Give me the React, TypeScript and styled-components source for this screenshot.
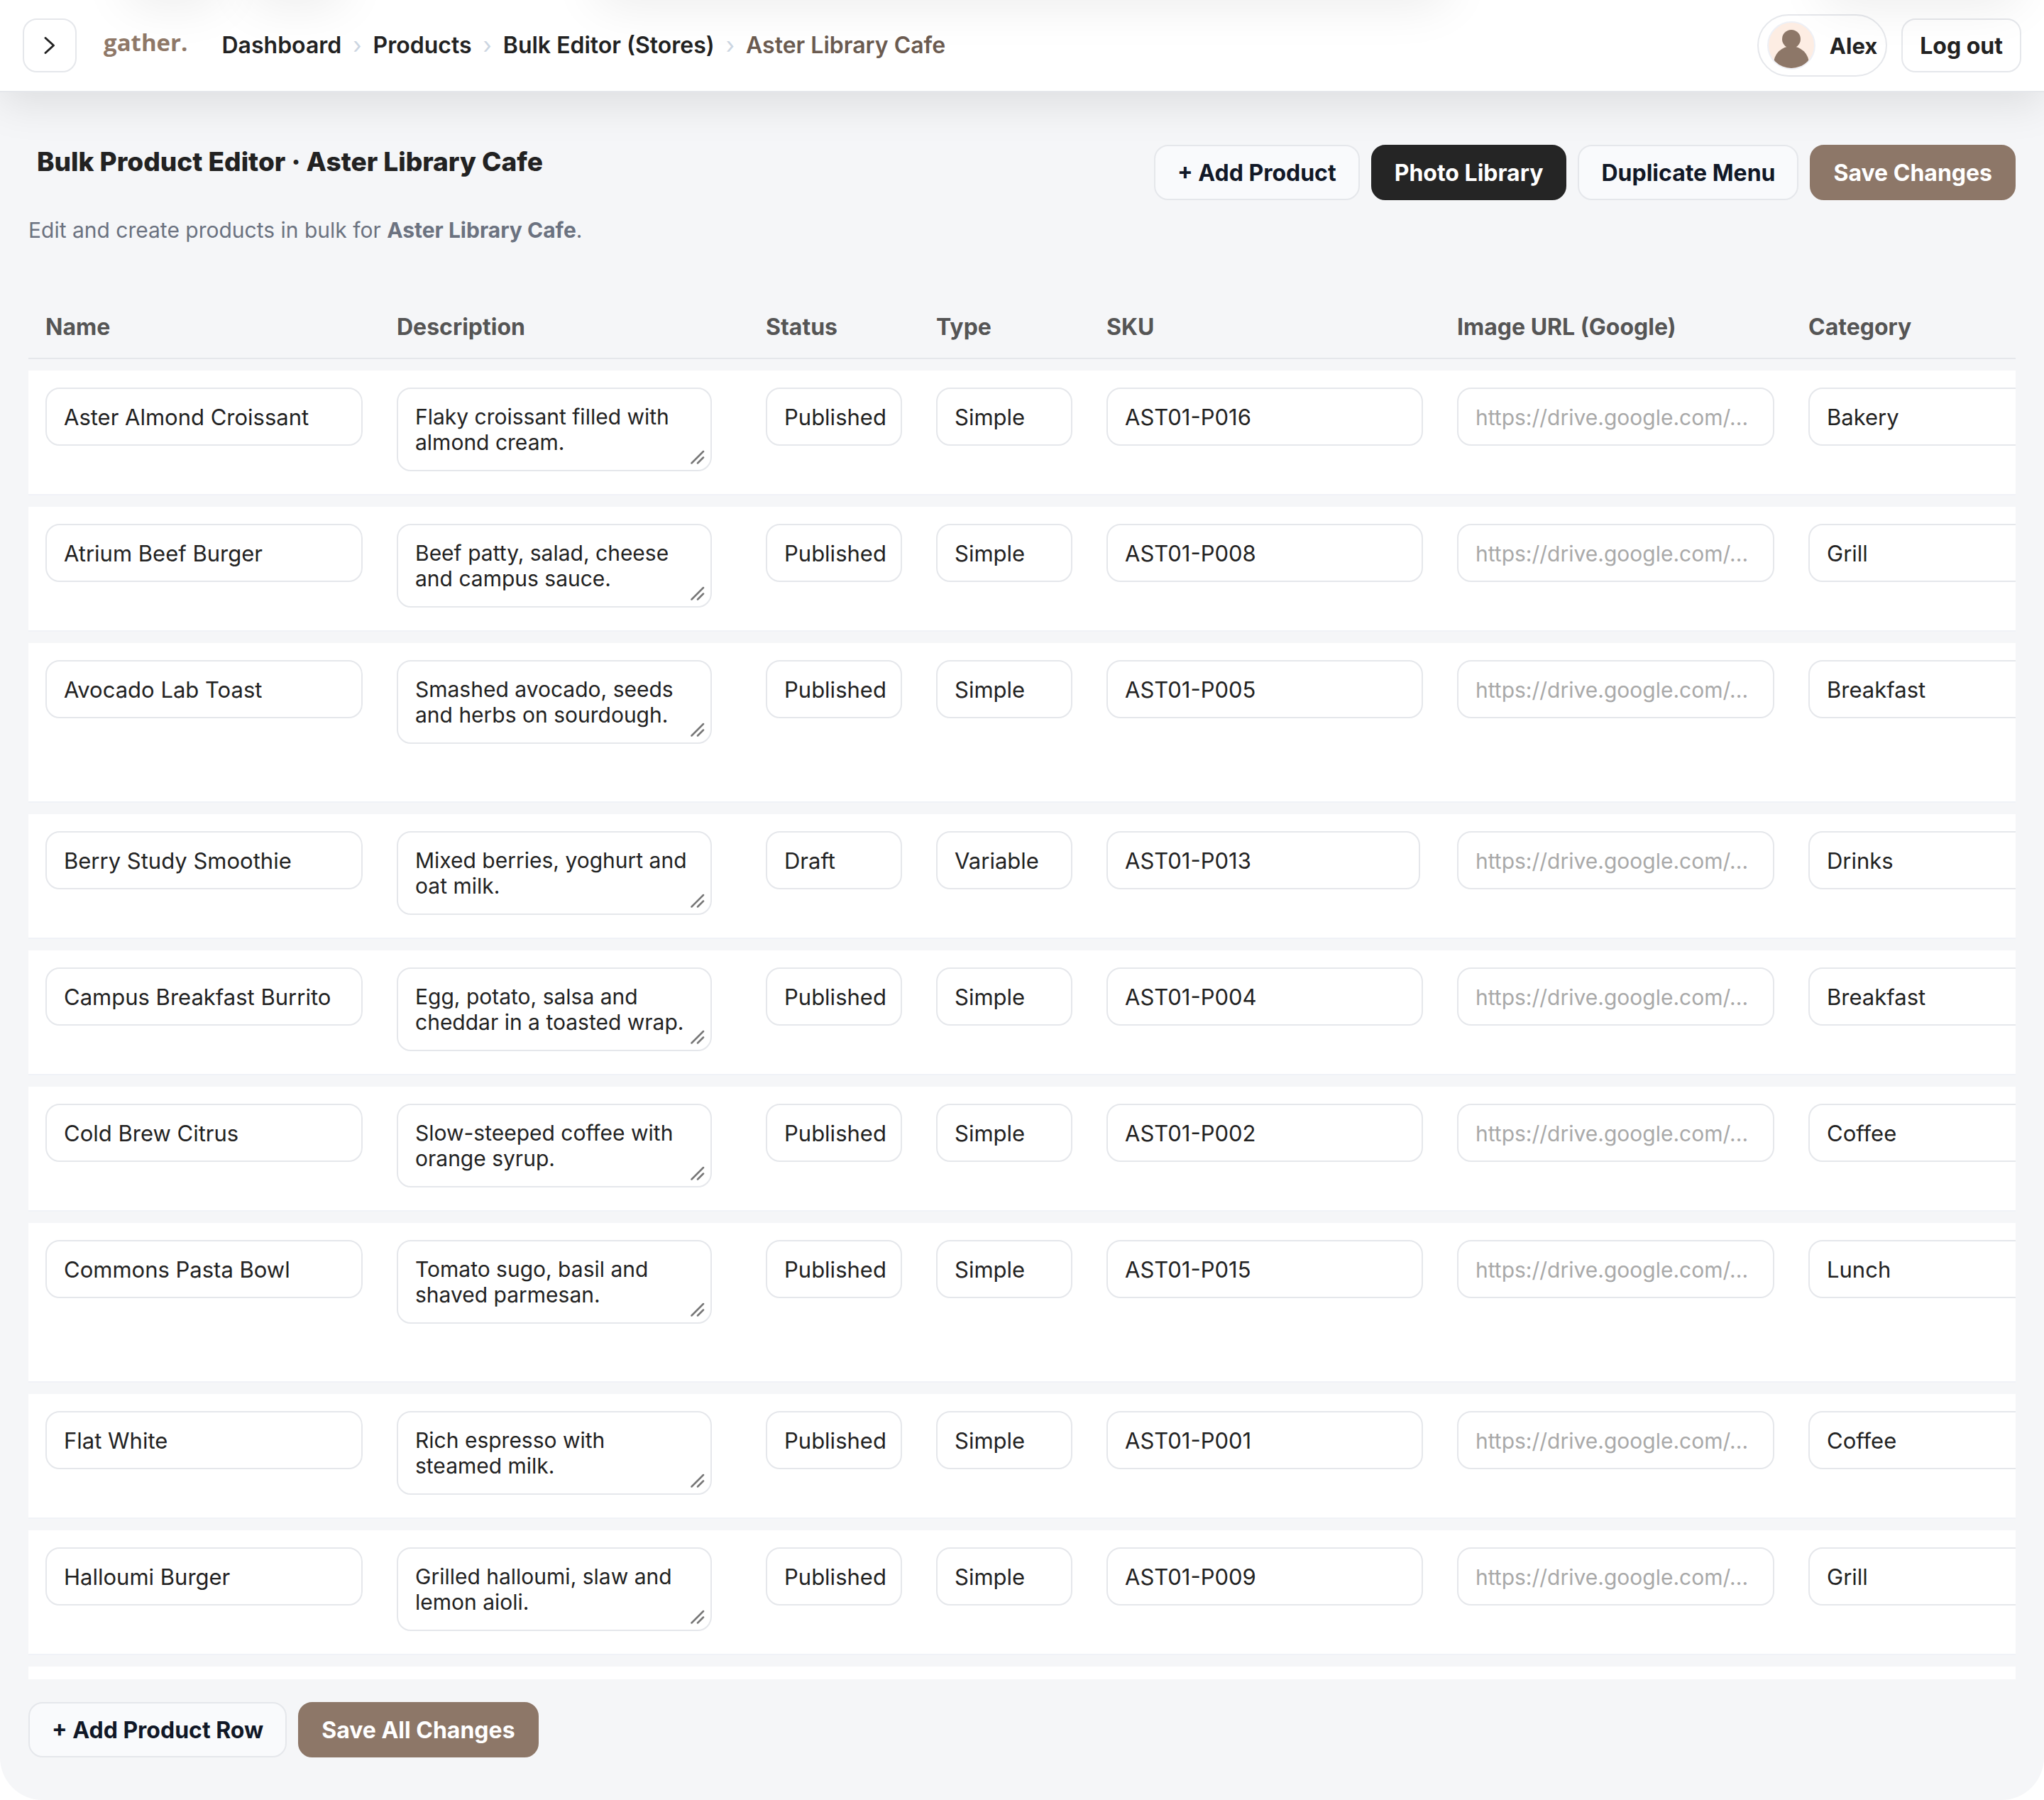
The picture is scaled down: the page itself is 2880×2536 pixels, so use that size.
import React, { useId } from "react";
import styled, { createGlobalStyle, css } from "styled-components";

const GlobalStyle = createGlobalStyle`
  *, *::before, *::after { box-sizing: border-box; }
  body {
    margin: 0;
    background: #ffffff;
    color: #222222;
    font-family: Inter, "Liberation Sans", sans-serif;
    font-size: 31px;
  }
  button, input, select, textarea { font: inherit; color: inherit; }
`;

const Shell = styled.div`
  display: flex;
  flex-direction: column;
  height: 100vh;
  overflow: hidden;
  background: #f5f6f8;
  border-radius: 0 0 60px 60px;
`;

/* ---------- top bar ---------- */

const TopBar = styled.header`
  position: relative;
  flex: none;
  display: flex;
  align-items: center;
  padding: 20px 32px;
  background: #ffffff;
  border-bottom: 2px solid #e5e7eb;
  box-shadow: 0 16px 60px rgba(0, 0, 0, 0.1);
`;

const ShadeLayer = styled.div`
  position: absolute;
  inset: 0;
  overflow: hidden;
  pointer-events: none;
`;

const Shade = styled.i<{ $left: string; $width: string }>`
  position: absolute;
  bottom: 100%;
  left: ${(p) => p.$left};
  width: ${(p) => p.$width};
  height: 72px;
  border-radius: 36px;
  box-shadow: 0 8px 68px rgba(0, 0, 0, 0.08);
`;

const MenuToggle = styled.button`
  display: grid;
  place-items: center;
  width: 76px;
  height: 76px;
  padding: 0;
  background: #ffffff;
  border: 2px solid #e5e7eb;
  border-radius: 20px;
`;

const Logo = styled.a`
  margin-left: 38px;
  padding-bottom: 8px;
  color: #8f7868;
  font-family: "Open Sans", sans-serif;
  font-size: 33px;
  line-height: 40px;
  font-weight: 700;
  text-decoration: none;
`;

const Crumbs = styled.nav`
  margin-left: 48px;

  ol {
    display: flex;
    gap: 16px;
    margin: 0;
    padding: 0;
    list-style: none;
    font-size: 32px;
    line-height: 40px;
    font-weight: 600;
  }
  li {
    display: flex;
    gap: 16px;
  }
  li + li::before {
    content: "›";
    color: #cbd5e1;
    font-weight: 400;
  }
`;

const CrumbLink = styled.a`
  color: #222222;
  text-decoration: none;
`;

const CrumbCurrent = styled.span`
  color: #6b5b50;
`;

const Account = styled.div`
  display: flex;
  align-items: center;
  gap: 20px;
  margin-left: auto;
`;

const UserPill = styled.button`
  display: flex;
  align-items: center;
  gap: 20px;
  height: 88px;
  padding: 0 12px;
  background: transparent;
  border: 2px solid #e5e7eb;
  border-radius: 44px;
  font-size: 31px;
  font-weight: 700;
`;

const LogoutButton = styled.button`
  height: 76px;
  padding: 0 24px;
  background: transparent;
  border: 2px solid #e5e7eb;
  border-radius: 20px;
  font-size: 32px;
  font-weight: 700;
`;

/* ---------- page ---------- */

const Page = styled.main`
  flex: 1;
  min-height: 0;
  display: flex;
  flex-direction: column;
  padding: 74px 40px 60px;
`;

const PageHead = styled.div`
  display: flex;
  justify-content: space-between;
  align-items: flex-start;
`;

const Title = styled.h1`
  margin: 0;
  padding-left: 12px;
  font-size: 37px;
  line-height: 48px;
  font-weight: 800;
`;

const Intro = styled.p`
  margin: 48px 0 0;
  color: #6b7280;
  font-size: 30px;
  line-height: 48px;
`;

const Actions = styled.div`
  display: flex;
  gap: 16px;
`;

type Tone = "light" | "dark" | "brand";

const tones = {
  light: css`
    background: #f9fafc;
    border-color: #e5e7eb;
    color: #111827;
  `,
  dark: css`
    background: #252525;
    border-color: #252525;
    color: #ffffff;
  `,
  brand: css`
    background: #8d7768;
    border-color: #8d7768;
    color: #ffffff;
  `,
};

const Button = styled.button<{ $tone: Tone }>`
  height: 78px;
  padding: 0 31px;
  border: 2px solid;
  border-radius: 20px;
  font-size: 32px;
  font-weight: 700;
  white-space: nowrap;
  ${(p) => tones[p.$tone]}
`;

/* ---------- table ---------- */

const TableScroll = styled.div`
  flex: 1;
  min-height: 0;
  margin: 52px 0 32px;
  overflow: auto;
  scrollbar-width: none;
`;

const Table = styled.table`
  width: 2978px;
  table-layout: fixed;
  border-collapse: separate;
  border-spacing: 0 16px;
`;

const HeadCell = styled.th`
  height: 90px;
  padding: 0 24px;
  border-bottom: 2px solid #e5e7eb;
  color: #555555;
  font-size: 32px;
  font-weight: 700;
  text-align: left;
`;

const Cell = styled.td<{ $tall?: boolean }>`
  height: ${(p) => (p.$tall ? 225 : 176)}px;
  padding: 24px;
  background: #ffffff;
  border-bottom: 2px solid #f0f2f7;
  vertical-align: top;
`;

const field = css`
  display: block;
  width: 100%;
  background: #ffffff;
  border: 2px solid #e5e7eb;
  border-radius: 20px;
  outline: none;
  color: #222222;
`;

const TextField = styled.input<{ $narrow?: boolean }>`
  ${field}
  width: ${(p) => (p.$narrow ? "99%" : "100%")};
  height: 82px;
  padding: 0 24px;
  font-size: 31px;

  &::placeholder {
    color: #a9a9a9;
    font-size: 30px;
    opacity: 1;
  }
`;

const SelectField = styled.select`
  ${field}
  height: 82px;
  padding: 0 0 0 24px;
  font-size: 31px;
  appearance: none;
`;

const AreaWrap = styled.div`
  position: relative;
  width: 444px;
`;

const AreaField = styled.textarea`
  ${field}
  height: 118px;
  padding: 21px 24px;
  font-size: 30px;
  line-height: 36px;
  resize: none;
  overflow: hidden;
`;

const Grip = styled.svg`
  position: absolute;
  right: 10px;
  bottom: 10px;
  pointer-events: none;
`;

/* ---------- data ---------- */

type Product = {
  name: string;
  description: string;
  status: "Published" | "Draft";
  type: "Simple" | "Variable";
  sku: string;
  category: string;
  tall?: boolean;
};

const products: Product[] = [
  { name: "Aster Almond Croissant", description: "Flaky croissant filled with almond cream.", status: "Published", type: "Simple", sku: "AST01-P016", category: "Bakery" },
  { name: "Atrium Beef Burger", description: "Beef patty, salad, cheese and campus sauce.", status: "Published", type: "Simple", sku: "AST01-P008", category: "Grill" },
  { name: "Avocado Lab Toast", description: "Smashed avocado, seeds and herbs on sourdough.", status: "Published", type: "Simple", sku: "AST01-P005", category: "Breakfast", tall: true },
  { name: "Berry Study Smoothie", description: "Mixed berries, yoghurt and oat milk.", status: "Draft", type: "Variable", sku: "AST01-P013", category: "Drinks" },
  { name: "Campus Breakfast Burrito", description: "Egg, potato, salsa and cheddar in a toasted wrap.", status: "Published", type: "Simple", sku: "AST01-P004", category: "Breakfast" },
  { name: "Cold Brew Citrus", description: "Slow-steeped coffee with orange syrup.", status: "Published", type: "Simple", sku: "AST01-P002", category: "Coffee" },
  { name: "Commons Pasta Bowl", description: "Tomato sugo, basil and shaved parmesan.", status: "Published", type: "Simple", sku: "AST01-P015", category: "Lunch", tall: true },
  { name: "Flat White", description: "Rich espresso with steamed milk.", status: "Published", type: "Simple", sku: "AST01-P001", category: "Coffee" },
  { name: "Halloumi Burger", description: "Grilled halloumi, slaw and lemon aioli.", status: "Published", type: "Simple", sku: "AST01-P009", category: "Grill" },
];

const columns = [
  { id: "name", label: "Name", width: 495 },
  { id: "description", label: "Description", width: 520 },
  { id: "status", label: "Status", width: 240 },
  { id: "type", label: "Type", width: 240 },
  { id: "sku", label: "SKU", width: 494 },
  { id: "image", label: "Image URL (Google)", width: 495 },
  { id: "category", label: "Category", width: 494 },
];

function Avatar() {
  const clip = useId();
  return (
    <svg width="68" height="68" viewBox="0 0 68 68" aria-hidden="true">
      <clipPath id={clip}>
        <circle cx="34" cy="34" r="32" />
      </clipPath>
      <circle cx="34" cy="34" r="33" fill="#fdede3" stroke="#eef0f6" strokeWidth="2" />
      <g clipPath={`url(#${clip})`} fill="#8d7768">
        <circle cx="34" cy="25" r="13" />
        <circle cx="34" cy="60" r="25" />
      </g>
    </svg>
  );
}

function ProductRow({ product }: { product: Product }) {
  const { tall } = product;
  return (
    <tr>
      <Cell $tall={tall}>
        <TextField aria-labelledby="col-name" defaultValue={product.name} />
      </Cell>
      <Cell $tall={tall}>
        <AreaWrap>
          <AreaField aria-labelledby="col-description" defaultValue={product.description} />
          <Grip width="20" height="20" viewBox="0 0 20 20" fill="none" stroke="#777777" strokeWidth="2.5" strokeLinecap="round" aria-hidden="true">
            <path d="M1.500 18.500 18 2M10 18.500 18 10.500" />
          </Grip>
        </AreaWrap>
      </Cell>
      <Cell $tall={tall}>
        <SelectField aria-labelledby="col-status" defaultValue={product.status}>
          <option>Published</option>
          <option>Draft</option>
        </SelectField>
      </Cell>
      <Cell $tall={tall}>
        <SelectField aria-labelledby="col-type" defaultValue={product.type}>
          <option>Simple</option>
          <option>Variable</option>
        </SelectField>
      </Cell>
      <Cell $tall={tall}>
        <TextField $narrow={product.type === "Variable"} aria-labelledby="col-sku" defaultValue={product.sku} />
      </Cell>
      <Cell $tall={tall}>
        <TextField aria-labelledby="col-image" placeholder="https://drive.google.com/..." />
      </Cell>
      <Cell $tall={tall}>
        <TextField aria-labelledby="col-category" defaultValue={product.category} />
      </Cell>
    </tr>
  );
}

export default function App() {
  return (
    <>
      <GlobalStyle />
      <Shell>
        <TopBar>
          <ShadeLayer aria-hidden="true">
            <Shade $left="6%" $width="5%" />
            <Shade $left="12%" $width="5%" />
            <Shade $left="29%" $width="42%" />
            <Shade $left="89%" $width="10%" />
          </ShadeLayer>
          <MenuToggle aria-label="Open menu">
            <svg width="18" height="28" viewBox="0 0 18 28" fill="none" stroke="#222222" strokeWidth="3" strokeLinecap="round" strokeLinejoin="round" aria-hidden="true">
              <path d="M3 3.500 14.500 14 3 24.500" />
            </svg>
          </MenuToggle>
          <Logo href="#">gather.</Logo>
          <Crumbs aria-label="Breadcrumb">
            <ol>
              <li><CrumbLink href="#">Dashboard</CrumbLink></li>
              <li><CrumbLink href="#">Products</CrumbLink></li>
              <li><CrumbLink href="#">Bulk Editor (Stores)</CrumbLink></li>
              <li><CrumbCurrent aria-current="page">Aster Library Cafe</CrumbCurrent></li>
            </ol>
          </Crumbs>
          <Account>
            <UserPill>
              <Avatar />
              Alex
            </UserPill>
            <LogoutButton>Log out</LogoutButton>
          </Account>
        </TopBar>

        <Page>
          <PageHead>
            <div>
              <Title>Bulk Product Editor · Aster Library Cafe</Title>
              <Intro>
                Edit and create products in bulk for <strong>Aster Library Cafe</strong>.
              </Intro>
            </div>
            <Actions>
              <Button $tone="light">+ Add Product</Button>
              <Button $tone="dark">Photo Library</Button>
              <Button $tone="light">Duplicate Menu</Button>
              <Button $tone="brand">Save Changes</Button>
            </Actions>
          </PageHead>

          <TableScroll>
            <Table>
              <colgroup>
                {columns.map((c) => (
                  <col key={c.id} width={c.width} />
                ))}
              </colgroup>
              <thead>
                <tr>
                  {columns.map((c) => (
                    <HeadCell key={c.id} id={`col-${c.id}`} scope="col">
                      {c.label}
                    </HeadCell>
                  ))}
                </tr>
              </thead>
              <tbody>
                {products.map((p) => (
                  <ProductRow key={p.sku} product={p} />
                ))}
                <tr>
                  <Cell colSpan={columns.length} />
                </tr>
              </tbody>
            </Table>
          </TableScroll>

          <Actions>
            <Button $tone="light">+ Add Product Row</Button>
            <Button $tone="brand">Save All Changes</Button>
          </Actions>
        </Page>
      </Shell>
    </>
  );
}
